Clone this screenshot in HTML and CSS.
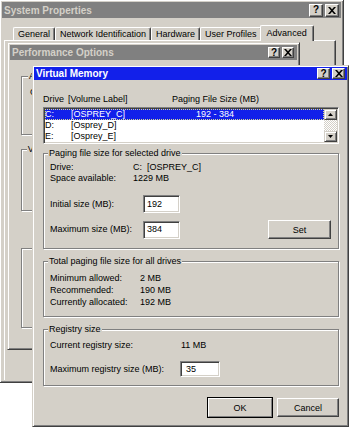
FILE: index.html
```html
<!DOCTYPE html>
<html>
  <head>
    <title>Virtual Memory</title>
    <link rel="stylesheet" href="styles.css">
  </head>
  <body>
    <div class="desktop">

      <!-- System Properties (back) -->
      <div class="window sysprops">
        <div class="titlebar">
          <span>System Properties</span>
          <div class="title-buttons">
            <span class="tbtn">?</span>
            <span class="tbtn"><svg width="8" height="7" viewBox="0 0 8 7"><path d="M0 0h2l2 2.3L6 0h2L5 3.5 8 7H6L4 4.7 2 7H0l3-3.5z"/></svg></span>
          </div>
        </div>
        <div class="tabs">
          <span class="tab">General</span>
          <span class="tab">Network Identification</span>
          <span class="tab">Hardware</span>
          <span class="tab">User Profiles</span>
          <span class="tab active">Advanced</span>
        </div>
        <div class="tab-panel"></div>
      </div>

      <!-- Performance Options (middle) -->
      <div class="window perfopts">
        <div class="titlebar">
          <span>Performance Options</span>
          <div class="title-buttons">
            <span class="tbtn">?</span>
            <span class="tbtn"><svg width="8" height="7" viewBox="0 0 8 7"><path d="M0 0h2l2 2.3L6 0h2L5 3.5 8 7H6L4 4.7 2 7H0l3-3.5z"/></svg></span>
          </div>
        </div>
        <div class="perf-body">
          <fieldset class="group perf-app">
            <legend>Application response</legend>
            <p class="perf-text">Optimize performance for:</p>
          </fieldset>
          <fieldset class="group perf-vm">
            <legend>Virtual memory</legend>
          </fieldset>
          <fieldset class="group perf-extra"></fieldset>
        </div>
      </div>

      <!-- Virtual Memory (front) -->
      <div class="window vm">
        <div class="titlebar active">
          <span>Virtual Memory</span>
          <div class="title-buttons">
            <span class="tbtn">?</span>
            <span class="tbtn"><svg width="8" height="7" viewBox="0 0 8 7"><path d="M0 0h2l2 2.3L6 0h2L5 3.5 8 7H6L4 4.7 2 7H0l3-3.5z"/></svg></span>
          </div>
        </div>

        <div class="vm-body">
          <div class="list-head">
            <span class="head-drive">Drive</span>
            <span class="head-label">[Volume Label]</span>
            <span>Paging File Size (MB)</span>
          </div>

          <div class="listbox">
            <div class="list-rows">
              <div class="row selected">
                <span class="col-drive">C:</span>
                <span class="col-label">[OSPREY_C]</span>
                <span>192 - 384</span>
              </div>
              <div class="row">
                <span class="col-drive">D:</span>
                <span class="col-label">[Osprey_D]</span>
              </div>
              <div class="row">
                <span class="col-drive">E:</span>
                <span class="col-label">[Osprey_E]</span>
              </div>
            </div>
            <div class="scrollbar">
              <span class="sbtn"><svg width="5" height="3" viewBox="0 0 5 3"><path d="M2.5 0L5 3H0z"/></svg></span>
              <span class="track"></span>
              <span class="sbtn"><svg width="5" height="3" viewBox="0 0 5 3"><path d="M0 0h5L2.5 3z"/></svg></span>
            </div>
          </div>

          <fieldset class="group sel-drive">
            <legend>Paging file size for selected drive</legend>
            <div class="info-grid">
              <span>Drive:</span><span>C:&nbsp; [OSPREY_C]</span>
              <span>Space available:</span><span>1229 MB</span>
            </div>
            <div class="field-row first">
              <span class="field-label">Initial size (MB):</span>
              <span class="input size-input">192</span>
            </div>
            <div class="field-row second">
              <span class="field-label">Maximum size (MB):</span>
              <span class="input size-input">384</span>
              <button class="btn set-btn">Set</button>
            </div>
          </fieldset>

          <fieldset class="group totals">
            <legend>Total paging file size for all drives</legend>
            <div class="info-grid wide">
              <span>Minimum allowed:</span><span>2 MB</span>
              <span>Recommended:</span><span>190 MB</span>
              <span>Currently allocated:</span><span>192 MB</span>
            </div>
          </fieldset>

          <fieldset class="group registry">
            <legend>Registry size</legend>
            <div class="info-grid reg">
              <span>Current registry size:</span><span>11 MB</span>
            </div>
            <div class="field-row reg-row">
              <span class="field-label reg-label">Maximum registry size (MB):</span>
              <span class="input reg-input">35</span>
            </div>
          </fieldset>

          <div class="dialog-buttons">
            <button class="btn default ok-btn">OK</button>
            <button class="btn cancel-btn">Cancel</button>
          </div>
        </div>
      </div>

    </div>
  </body>
</html>
```

FILE: styles.css
```css
body {
  margin: 0;
  background: #ffffff;
  font-family: "Liberation Sans", Arial, sans-serif;
  font-size: 9px;
  color: #000000;
}

.desktop {
  position: relative;
  width: 350px;
  height: 429px;
  overflow: hidden;
}

/* Window frame */
.window {
  position: absolute;
  box-sizing: border-box;
  display: flex;
  flex-direction: column;
  background: #d4d0c8;
  border: 1px solid;
  border-color: #d4d0c8 #404040 #404040 #d4d0c8;
  box-shadow: inset 1px 1px #ffffff, inset -1px -1px #808080;
  padding: 2px;
}

.sysprops {
  left: -1px;
  top: -1px;
  width: 345px;
  height: 384px;
}

.perfopts {
  left: 7px;
  top: 42px;
  width: 293px;
  height: 308px;
}

.vm {
  left: 32px;
  top: 65px;
  width: 317px;
  height: 362px;
  padding: 1px;
}

/* Title bars */
.titlebar {
  display: flex;
  align-items: center;
  justify-content: space-between;
  flex-shrink: 0;
  height: 16px;
  padding: 0 2px;
  background: #808080;
  color: #d4d0c8;
  font-size: 10px;
  font-weight: bold;
  white-space: nowrap;
}

.perfopts .titlebar {
  height: 15px;
  padding-right: 3px;
}

.titlebar.active {
  height: 13px;
  background: #1220ea;
  color: #ffffff;
}

.title-buttons {
  display: flex;
  gap: 2px;
}

.tbtn {
  box-sizing: border-box;
  display: flex;
  align-items: center;
  justify-content: center;
  width: 14px;
  height: 13px;
  background: #d4d0c8;
  border: 1px solid;
  border-color: #ffffff #404040 #404040 #ffffff;
  box-shadow: inset -1px -1px #808080;
  color: #000000;
  font-size: 10px;
  font-weight: bold;
  line-height: 1;
}

.perfopts .tbtn {
  width: 12px;
  height: 11px;
}

.vm .tbtn {
  width: 13px;
  height: 11px;
}

/* System Properties tabs */
.tabs {
  display: flex;
  align-items: flex-end;
  height: 15px;
  margin: 7px 0 0 11px;
}

.tab {
  box-sizing: border-box;
  height: 13px;
  padding: 0 4px;
  line-height: 12px;
  white-space: nowrap;
  border: 1px solid;
  border-color: #ffffff #404040 transparent #ffffff;
  border-bottom: none;
  border-radius: 2px 2px 0 0;
  box-shadow: inset -1px 0 #808080;
}

.tab.active {
  position: relative;
  z-index: 1;
  height: 16px;
  margin: 0 -2px -1px;
  padding: 1px 6px 0;
  background: #d4d0c8;
}

.tab-panel {
  flex: 1;
  width: 330px;
  margin-left: 2px;
  border-top: 1px solid #ffffff;
  border-left: 1px solid #ffffff;
  border-right: 1px solid #404040;
  box-shadow: inset -1px 0 #808080;
}

/* Group boxes */
.group {
  min-width: 0;
  margin: 0;
  border: 1px solid #808080;
  box-shadow: inset 1px 1px #ffffff, 1px 1px #ffffff;
}

.group legend {
  margin-left: -2px;
  padding: 0 1px;
  line-height: 11px;
  background: #d4d0c8;
}

/* Performance Options contents */
.perf-body {
  padding: 11px 0 0 11px;
}

.perf-app {
  height: 64px;
  box-sizing: border-box;
  padding: 0 0 0 8px;
}

.perf-text {
  margin: 5px 0 0;
  line-height: 11px;
}

.perf-vm {
  height: 67px;
  box-sizing: border-box;
  margin-top: 9px;
}

.perf-extra {
  height: 80px;
  box-sizing: border-box;
  margin-top: 37px;
}

/* Virtual Memory contents */
.vm-body {
  padding: 0 8px 0 9px;
  line-height: 11px;
}

.list-head {
  display: flex;
  margin-top: 14px;
  white-space: nowrap;
}

.head-drive {
  width: 25px;
}

.head-label {
  width: 104px;
}

.listbox {
  display: flex;
  height: 37px;
  box-sizing: border-box;
  margin-top: 2px;
  background: #ffffff;
  border: 1px solid;
  border-color: #808080 #ffffff #ffffff #808080;
  box-shadow: inset 1px 1px #404040, inset -1px -1px #d4d0c8;
  padding: 1px;
}

.list-rows {
  flex: 1;
}

.row {
  display: flex;
  height: 11px;
  white-space: nowrap;
}

.row.selected {
  background: #1220ea;
  color: #ffffff;
  outline: 1px dotted #d8d890;
  outline-offset: -1px;
}

.col-drive {
  width: 26px;
}

.col-label {
  width: 125px;
}

.scrollbar {
  display: flex;
  flex-direction: column;
  width: 13px;
}

.sbtn {
  box-sizing: border-box;
  display: flex;
  align-items: center;
  justify-content: center;
  height: 11px;
  background: #d4d0c8;
  border: 1px solid;
  border-color: #d4d0c8 #404040 #404040 #d4d0c8;
  box-shadow: inset 1px 1px #ffffff, inset -1px -1px #808080;
}

.track {
  flex: 1;
  background: repeating-conic-gradient(#ffffff 0 25%, #d4d0c8 0 50%) 0 0 / 2px 2px;
}

.sel-drive {
  margin-top: 4px;
  padding: 3px 7px 9px 6px;
}

.totals {
  margin-top: 7px;
  padding: 5px 7px 8px 6px;
}

.registry {
  margin-top: 7px;
  padding: 5px 7px 8px 6px;
}

.info-grid {
  display: grid;
  grid-template-columns: 83px auto;
  white-space: nowrap;
}

.info-grid.wide {
  grid-template-columns: 90px auto;
  line-height: 12px;
}

.info-grid.reg {
  grid-template-columns: 131px auto;
}

.field-row {
  display: flex;
  align-items: center;
  white-space: nowrap;
}

.field-row.first {
  margin-top: 11px;
}

.field-row.second {
  margin-top: 7px;
}

.field-label {
  width: 93px;
}

.input {
  box-sizing: border-box;
  background: #ffffff;
  border: 1px solid;
  border-color: #808080 #ffffff #ffffff #808080;
  box-shadow: inset 1px 1px #404040, inset -1px -1px #d4d0c8;
  padding: 0 3px;
  display: flex;
  align-items: center;
}

.size-input {
  width: 37px;
  height: 18px;
}

.reg-row {
  margin-top: 10px;
}

.reg-label {
  width: 130px;
}

.reg-input {
  width: 40px;
  height: 16px;
  padding-left: 5px;
}

.btn {
  box-sizing: border-box;
  height: 19px;
  padding: 0;
  background: #d4d0c8;
  border: 1px solid;
  border-color: #ffffff #404040 #404040 #ffffff;
  box-shadow: inset -1px -1px #808080;
  font-family: inherit;
  font-size: 9px;
  color: #000000;
}

.btn.default {
  outline: 1px solid #000000;
  outline-offset: 0;
  border-color: #ffffff #808080 #808080 #ffffff;
  box-shadow: none;
}

.set-btn {
  width: 63px;
  margin-left: auto;
}

.dialog-buttons {
  display: flex;
  justify-content: flex-end;
  gap: 5px;
  margin-top: 12px;
}

.ok-btn {
  width: 64px;
}

.cancel-btn {
  width: 62px;
}
```
